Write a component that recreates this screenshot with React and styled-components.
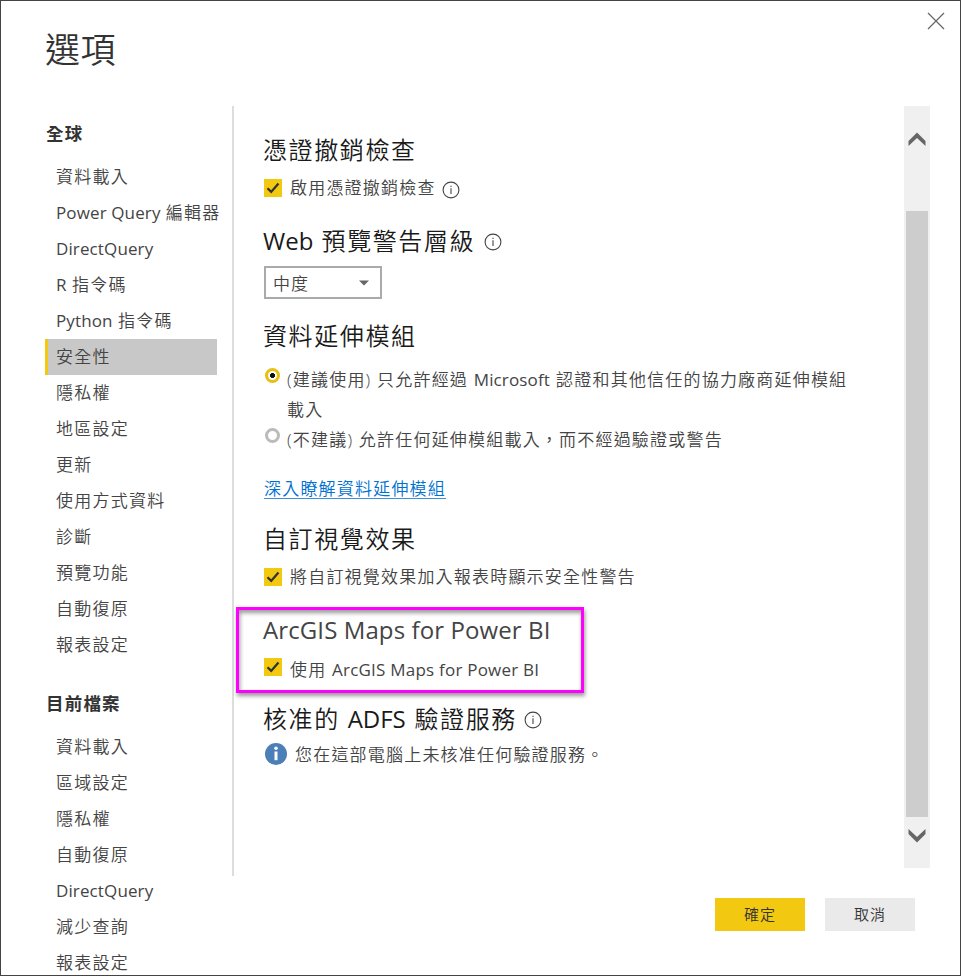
import React from 'react';
import styled, { createGlobalStyle, css } from 'styled-components';

const GlobalStyle = createGlobalStyle`
  * { box-sizing: border-box; }
  body {
    margin: 0;
    background: #fff;
    font-family: "Open Sans", "Noto Sans CJK TC", sans-serif;
    color: #444;
  }
`;

const Window = styled.div`
  width: 961px;
  height: 976px;
  border: 1px solid #444;
  background: #fff;
  overflow: hidden;
  display: grid;
  grid-template-columns: 231px 1fr;
  grid-template-rows: 105px 1fr;
`;

const TitleBar = styled.header`
  grid-column: 1 / -1;
  display: flex;
  justify-content: space-between;
  align-items: flex-start;
  padding: 10px 14px 0 44px;
`;

const Title = styled.h1`
  margin: 12px 0 0;
  font: 350 35px/50px "Noto Sans CJK TC", sans-serif;
  letter-spacing: 0.6px;
  color: #333;
`;

const Sidebar = styled.nav`
  padding-left: 44px;
  min-height: 0;
  white-space: nowrap;
`;

const GroupTitle = styled.h2`
  margin: 0;
  height: ${p => p.$h}px;
  font-size: 17.5px;
  font-weight: 700;
  line-height: 54px;
  padding-left: 1px;
  padding-top: ${p => p.$h - 53}px;
  letter-spacing: 1.2px;
  color: #333;
`;

const NavItem = styled.div`
  width: 172px;
  height: 36px;
  line-height: 36px;
  padding-left: 8px;
  border-left: 3px solid ${p => (p.$active ? '#f2c811' : 'transparent')};
  background: ${p => (p.$active ? '#c8c8c8' : 'transparent')};
  font-size: 17px;
  font-weight: 350;
  letter-spacing: 1.25px;
`;

const Latin = styled.span`
  font-weight: 400;
  font-size: ${p => p.$size || 17}px;
  letter-spacing: ${p => p.$ls || 0}px;
  margin-right: ${p => p.$mr || 0}px;
`;

const Main = styled.div`
  display: grid;
  grid-template-columns: 1fr 26px;
  grid-template-rows: 770px 1fr;
  padding-right: 30px;
  min-width: 0;
`;

const Content = styled.main`
  border-left: 2px solid #ddd;
  padding: 24px 0 0 29px;
  white-space: nowrap;
`;

const Heading = styled.h2`
  display: flex;
  align-items: center;
  gap: ${p => p.$gap || 9}px;
  margin: 0;
  height: 40px;
  margin-top: ${p => p.$mt || 0}px;
  font-size: 24px;
  font-weight: ${p => (p.$soft ? 400 : 350)};
  line-height: 40px;
  letter-spacing: 1.6px;
  color: ${p => (p.$soft ? '#444' : '#1a1a1a')};
`;

const OptionRow = styled.label`
  display: flex;
  align-items: ${p => (p.$top ? 'flex-start' : 'center')};
  margin-top: ${p => p.$mt || 0}px;
  min-height: 30px;
  padding-left: 1px;
  gap: ${p => (p.$top ? 7 : 8)}px;
  font-size: 17px;
  font-weight: 350;
  line-height: 30px;
  letter-spacing: 1.2px;
  color: #444;
`;

const LoweredText = styled.span`
  padding-top: 6px;
  margin-bottom: -1px;
`;

const CheckBox = styled.span`
  display: flex;
  width: 18px;
  height: 18px;
  background: #f2c811;
  flex: none;
`;

const Radio = styled.span`
  width: 15px;
  height: 15px;
  border-radius: 50%;
  flex: none;
  margin: 3px 0 0 1px;
  border: 3px solid #bbb;
  background: #fff;
  ${p => p.$on && css`
    border-color: #e8bf12;
    background: radial-gradient(circle, #111 0 2.2px, #fff 2.8px);
  `}
`;

const Select = styled.div`
  display: flex;
  align-items: center;
  justify-content: space-between;
  width: 118px;
  height: 33px;
  margin: 5px 0 0 1px;
  padding: 0 11px 0 7px;
  border: 2px solid #aaa;
  font-size: 17px;
  font-weight: 350;
  letter-spacing: 1px;
`;

const Link = styled.a`
  display: block;
  width: 182px;
  height: 23px;
  margin: 21px 0 0 1px;
  border-bottom: 1px solid #3d90d8;
  color: #0071d0;
  font-size: 17px;
  font-weight: 350;
  line-height: 26px;
  letter-spacing: 1.2px;
`;

const Highlight = styled.section`
  width: 348px;
  height: 86px;
  margin: 15px 0 0 -27px;
  padding: 0 0 0 24px;
  border: 3px solid #ff00ff;
  box-shadow: 1px 3px 4px rgba(0, 0, 0, 0.4), inset 1px 3px 4px rgba(0, 0, 0, 0.4);
`;

const Scrollbar = styled.div`
  width: 26px;
  height: 762px;
  background: #f0f0f0;
  display: flex;
  flex-direction: column;
  align-items: center;
`;

const ScrollArrow = styled.div`
  height: ${p => p.$h}px;
  padding-top: ${p => p.$pt}px;
  display: flex;
`;

const Thumb = styled.div`
  width: 22px;
  height: 606px;
  background: #cdcdcd;
`;

const Footer = styled.footer`
  grid-column: 1 / -1;
  display: flex;
  justify-content: flex-end;
  align-items: flex-start;
  gap: 20px;
  padding: 22px 15px 0 0;
`;

const Button = styled.button`
  width: 90px;
  height: 33px;
  padding: 0 0 2px;
  border: 0;
  background: ${p => (p.$primary ? '#f2c811' : '#eaeaea')};
  color: #333;
  font: 350 15px/31px "Noto Sans CJK TC", sans-serif;
  letter-spacing: 1px;
`;

const InfoSvg = styled.svg`
  display: block;
  flex: none;
  margin-top: ${p => p.$mt || 0}px;
  margin-left: ${p => p.$ml || 0}px;
`;

const InfoIcon = ({ mt, ml }) => (
  <InfoSvg $mt={mt} $ml={ml} width="18" height="18" viewBox="0 0 18 18" fill="none">
    <circle cx="9" cy="9" r="7.9" stroke="#444" strokeWidth="1.1" />
    <path d="M9 7.3v5.6M9 4.8v1.3" stroke="#444" strokeWidth="1.1" />
  </InfoSvg>
);

const Check = () => (
  <CheckBox>
    <svg width="18" height="18" viewBox="0 0 18 18" fill="none">
      <path d="M3.5 9.2 7.2 12.9 14.5 4.4" stroke="#333" strokeWidth="2.3" />
    </svg>
  </CheckBox>
);

const globalItems = [
  '資料載入', ['Power Query', '編輯器'], ['DirectQuery'], ['R', '指令碼'], ['Python', '指令碼'],
  '安全性', '隱私權', '地區設定', '更新', '使用方式資料', '診斷', '預覽功能', '自動復原', '報表設定',
];
const fileItems = ['資料載入', '區域設定', '隱私權', '自動復原', ['DirectQuery'], '減少查詢', '報表設定'];

const renderItem = item => (
  <NavItem key={String(item)} $active={item === '安全性'}>
    {typeof item === 'string' ? item : (
      <><Latin $ls={0.12} $mr={0.8}>{item[0]}{item[1] ? ' ' : ''}</Latin>{item[1]}</>
    )}
  </NavItem>
);

export default function App() {
  return (
    <Window>
      <GlobalStyle />
      <TitleBar>
        <Title>選項</Title>
        <svg width="20" height="20" viewBox="0 0 20 20" fill="none">
          <path d="M2 2 18 18M18 2 2 18" stroke="#666" strokeWidth="1.2" />
        </svg>
      </TitleBar>
      <Sidebar>
        <GroupTitle $h={53}>全球</GroupTitle>
        {globalItems.map(renderItem)}
        <GroupTitle $h={66}>目前檔案</GroupTitle>
        {fileItems.map(renderItem)}
      </Sidebar>
      <Main>
        <Content>
          <Heading>憑證撤銷檢查</Heading>
          <OptionRow $mt={3}><Check /><span>啟用憑證撤銷檢查</span><InfoIcon mt={4} ml={-2} /></OptionRow>
          <Heading $mt={18}><span><Latin $size={24} $mr={2}>Web </Latin>預覽警告層級</span><InfoIcon mt={1} /></Heading>
          <Select>
            中度
            <svg width="10" height="6" viewBox="0 0 10 6"><path d="M0 .5h10L5 5.5z" fill="#666" /></svg>
          </Select>
          <Heading $mt={17}>資料延伸模組</Heading>
          <OptionRow $mt={9} $top>
            <Radio $on />
            <span>(建議使用) 只允許經過 <Latin $ls={0.15} $mr={1.5}>Microsoft </Latin>認證和其他信任的協力廠商延伸模組<br />載入</span>
          </OptionRow>
          <OptionRow $top><Radio /><span>(不建議) 允許任何延伸模組載入，而不經過驗證或警告</span></OptionRow>
          <Link>深入瞭解資料延伸模組</Link>
          <Heading $mt={20}>自訂視覺效果</Heading>
          <OptionRow $mt={3}><Check /><span>將自訂視覺效果加入報表時顯示安全性警告</span></OptionRow>
          <Highlight>
            <Heading $soft><Latin $size={24} $ls={0.1}>ArcGIS Maps for Power BI</Latin></Heading>
            <OptionRow $mt={-1}><Check /><LoweredText>使用 <Latin $ls={0.22}>ArcGIS Maps for Power BI</Latin></LoweredText></OptionRow>
          </Highlight>
          <Heading $mt={6} $gap={7}><span>核准的 <Latin $size={24} $mr={2.5}>ADFS </Latin>驗證服務</span><InfoIcon mt={2} /></Heading>
          <OptionRow $mt={1}>
            <InfoSvg $mt={-3} $ml={1} width="22" height="22" viewBox="0 0 22 22">
              <circle cx="11" cy="11" r="11" fill="#4a7fb8" />
              <circle cx="11" cy="5.3" r="1.8" fill="#fff" />
              <path d="M9.5 8.5h3v8.7h-3z" fill="#fff" />
            </InfoSvg>
            <span>您在這部電腦上未核准任何驗證服務。</span>
          </OptionRow>
        </Content>
        <Scrollbar>
          <ScrollArrow $h={105} $pt={26}>
            <svg width="18" height="15" viewBox="0 0 18 15"><path d="M.5 9 9 .5 17.5 9v5L9 6 .5 14z" fill="#666" /></svg>
          </ScrollArrow>
          <Thumb />
          <ScrollArrow $h={51} $pt={11}>
            <svg width="18" height="15" viewBox="0 0 18 15"><path d="M.5 6 9 14.5 17.5 6V1L9 9 .5 1z" fill="#666" /></svg>
          </ScrollArrow>
        </Scrollbar>
        <Footer><Button $primary>確定</Button><Button>取消</Button></Footer>
      </Main>
    </Window>
  );
}
